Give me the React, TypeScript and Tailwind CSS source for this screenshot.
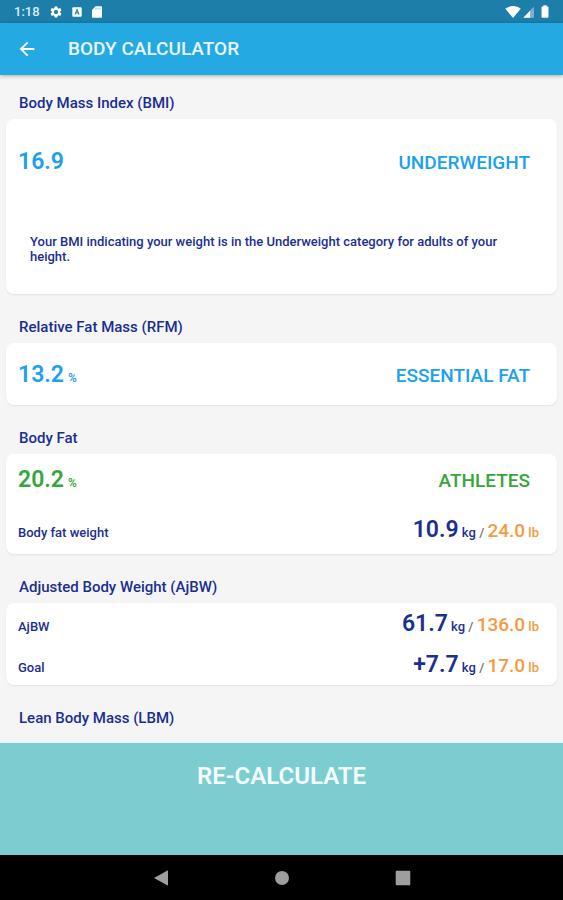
import React from 'react';
import { MdArrowBack, MdSettings } from 'react-icons/md';

const StatusBar = () => (
  <div className="flex h-[23px] shrink-0 items-center bg-[#1d7ea9] pl-3.5 pr-3.5 text-white">
    <span className="text-[13px] font-medium leading-4 text-[#d9edf7]">1:18</span>
    <MdSettings className="ml-[9px] h-3.5 w-3.5" />
    <svg className="ml-[9px] h-2.5 w-2.5" viewBox="0 0 10 10">
      <rect x="0.3" y="0.3" width="9.4" height="9.4" rx="1" fill="#fff" />
      <path d="M3 7.6 5 2.6 7 7.6M3.8 6h2.4" fill="none" stroke="#1d7ea9" strokeWidth="1.1" />
    </svg>
    <svg className="ml-[9px] h-3 w-3" viewBox="0 0 12 12">
      <path d="M4.6 0.3H10a1 1 0 0 1 1 1v9.4a1 1 0 0 1-1 1H2a1 1 0 0 1-1-1V3.9z" fill="#fff" />
      <path d="M5 1.6v1.8M7 1.6v1.8M9 1.6v1.8" stroke="#1d7ea9" strokeWidth="0.5" />
    </svg>
    <div className="ml-auto flex items-center">
      <svg className="h-3 w-4" viewBox="0 0 16 12">
        <path d="M0.3 2.8C4.6-0.8 11.4-0.8 15.7 2.8L8 12z" fill="#fff" />
      </svg>
      <svg className="ml-0.5 h-3 w-3" viewBox="0 0 12 12">
        <path d="M11 0.6V11.7H0.4z" fill="#fff" fillOpacity="0.4" />
        <path d="M7.2 4.6V11.7H0.4z" fill="#fff" />
      </svg>
      <svg className="ml-1.5 h-[13px] w-2" viewBox="0 0 8 13">
        <path d="M2.4 0.3h3.2v1.2h1A0.9 0.9 0 0 1 7.5 2.4v9.4a0.9 0.9 0 0 1-0.9 0.9H1.4a0.9 0.9 0 0 1-0.9-0.9V2.4a0.9 0.9 0 0 1 0.9-0.9h1z" fill="#fff" />
      </svg>
    </div>
  </div>
);

type SectionProps = {
  title: string;
  children?: React.ReactNode;
};

const Section = ({ title, children }: SectionProps) => (
  <section>
    <h2 className="px-[13px] text-[15px] font-medium leading-5">{title}</h2>
    {children && (
      <div className="mt-1.5 rounded-lg bg-white px-3 shadow-[0_1px_2px_rgba(0,0,0,0.08)]">
        {children}
      </div>
    )}
  </section>
);

type ResultProps = {
  value: string;
  unit?: string;
  status: string;
};

const Result = ({ value, unit, status }: ResultProps) => (
  <div className="flex h-7 items-baseline justify-between pr-[15px] leading-[30px]">
    <p className="text-[23px] font-semibold leading-[30px]">
      {value}
      {unit && <span className="ml-1 text-xs">{unit}</span>}
    </p>
    <p className="text-[19px] font-medium leading-[30px]">{status}</p>
  </div>
);

type WeightProps = {
  label: string;
  kg: string;
  lb: string;
};

const Weight = ({ label, kg, lb }: WeightProps) => (
  <div className="flex h-7 items-baseline justify-between pr-1.5">
    <p className="text-[13px] font-medium leading-[30px]">{label}</p>
    <p className="text-[13px] font-medium leading-[30px]">
      <span className="text-[23px] font-semibold leading-[30px]">{kg}</span> kg{' '}
      <span className="text-gray-500">/</span>{' '}
      <span className="text-[#f59a3f]">
        <span className="text-[19px] leading-[30px]">{lb}</span> lb
      </span>
    </p>
  </div>
);

function App() {
  return (
    <div className="flex h-screen flex-col bg-[#f5f5f5] font-['Roboto',sans-serif] text-[#1b2f91]">
      <StatusBar />

      <header className="z-10 flex h-[52px] shrink-0 items-center bg-[#24a9e3] px-4 text-white shadow-[0_1px_4px_rgba(0,0,0,0.3)]">
        <button type="button" aria-label="Back">
          <MdArrowBack className="h-[22px] w-[22px]" />
        </button>
        <h1 className="ml-[30px] text-[19px] font-medium text-[#e9f7fd]">BODY CALCULATOR</h1>
      </header>

      <main className="flex min-h-0 flex-1 flex-col gap-[23px] overflow-hidden px-1.5 pt-[18px]">
        <Section title="Body Mass Index (BMI)">
          <div className="pt-7 text-[#1ca1ec]">
            <Result value="16.9" status="UNDERWEIGHT" />
          </div>
          <p className="px-3 pb-[30px] pt-[59px] text-[13px] font-medium leading-[15px]">
            Your BMI indicating your weight is in the Underweight category for adults of your height.
          </p>
        </Section>

        <Section title="Relative Fat Mass (RFM)">
          <div className="py-[17px] text-[#1ca1ec]">
            <Result value="13.2" unit="%" status="ESSENTIAL FAT" />
          </div>
        </Section>

        <Section title="Body Fat">
          <div className="py-[11px] text-[#35a63a]">
            <Result value="20.2" unit="%" status="ATHLETES" />
          </div>
          <div className="py-[11px]">
            <Weight label="Body fat weight" kg="10.9" lb="24.0" />
          </div>
        </Section>

        <Section title="Adjusted Body Weight (AjBW)">
          <div className="flex flex-col gap-[13px] pb-[7px] pt-1.5">
            <Weight label="AjBW" kg="61.7" lb="136.0" />
            <Weight label="Goal" kg="+7.7" lb="17.0" />
          </div>
        </Section>

        <Section title="Lean Body Mass (LBM)" />
      </main>

      <button
        type="button"
        className="flex h-[114px] shrink-0 justify-center border-t-2 border-[#e6f6f6] bg-[#7ccdd0] pt-[18px] text-2xl font-semibold leading-[30px] text-[#f4fcfc]"
      >
        RE-CALCULATE
      </button>

      <nav className="flex h-[45px] shrink-0 items-center justify-center gap-[105px] bg-black text-[#9e9e9e]">
        <button type="button" aria-label="Back">
          <svg className="h-4 w-4" viewBox="0 0 16 16" fill="currentColor">
            <path d="M15 0.3V15.7L1 8z" />
          </svg>
        </button>
        <button type="button" aria-label="Home">
          <svg className="h-4 w-4" viewBox="0 0 16 16" fill="currentColor">
            <circle cx="8" cy="8" r="7" />
          </svg>
        </button>
        <button type="button" aria-label="Recent apps">
          <svg className="h-4 w-4" viewBox="0 0 16 16" fill="currentColor">
            <rect x="0.7" y="0.7" width="14.6" height="14.6" rx="1" />
          </svg>
        </button>
      </nav>
    </div>
  );
}

export default App;
